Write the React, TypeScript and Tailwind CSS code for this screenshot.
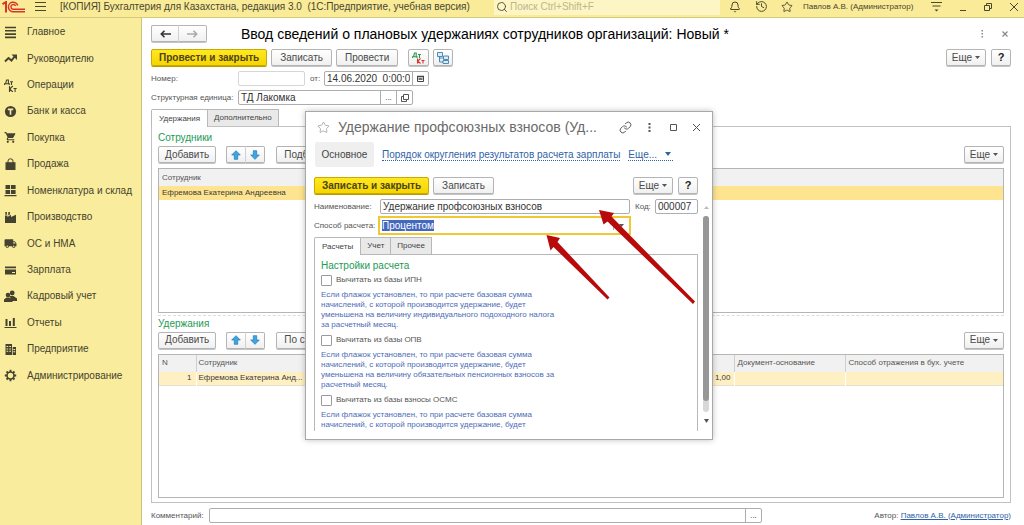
import { useEffect, useRef, type ReactNode } from "react";
import { Bell, History, Star, Search, Link as LinkIcon } from "lucide-react";
import { MdShoppingCart, MdLocalShipping } from "react-icons/md";

const menu: { label: string; icon: ReactNode }[] = [
  { label: "Главное", icon: <path d="M1 1.5h11M1 4.8h11M1 8.1h11M1 11.4h11" stroke="currentColor" strokeWidth="1.6" /> },
  {
    label: "Руководителю",
    icon: (
      <>
        <path d="M1 9.5 4.5 6l3 2.5L11 4" fill="none" stroke="currentColor" strokeWidth="2" />
        <path d="M7.5 2.5H13V8z" />
      </>
    ),
  },
  {
    label: "Операции",
    icon: (
      <g fill="none" stroke="currentColor" strokeWidth="1.1">
        <path d="M.5 6V4.8h4.8V6M1.5 4.8 2.6 1h1.8v3.800M6 2.800h3M7.500 2.800V6M5.500 7v6M8.800 7 5.700 10l3.100 3M9.500 9.500h3.200M11.100 9.500V13" />
      </g>
    ),
  },
  {
    label: "Банк и касса",
    icon: (
      <>
        <circle cx="6.5" cy="6.5" r="5.6" />
        <path d="M3.8 4.4h5.4M6.5 4.4v5.4" stroke="#faec9d" strokeWidth="1.6" />
      </>
    ),
  },
  { label: "Покупка", icon: <MdShoppingCart size={13} /> },
  {
    label: "Продажа",
    icon: (
      <>
        <path d="M1.5 4.2h10V12h-10z" />
        <path d="M4 6V3a2.5 2.2 0 0 1 5 0v3" fill="none" stroke="currentColor" strokeWidth="1" />
      </>
    ),
  },
  { label: "Номенклатура и склад", icon: <path d="M1.5 1h4.6v4H1.5zM7 1h4.600v4H7zM1.500 6h4.600v4H1.500zM7 6h4.600v4H7zM.5 11h12v1.200H.5z" /> },
  { label: "Производство", icon: <path d="M1 12V4.500h2.500V6L7 3.800V6l5-2.200V12zM1.300 1h1.600v2.800H1.300zM4.300 1h1.600v2.500l-1.600 1z" /> },
  { label: "ОС и НМА", icon: <MdLocalShipping size={13} /> },
  { label: "Зарплата", icon: <path d="M1 2.500h11v1.700H1zM1 5.500h11v5H1zM8 8v1h3V8z" fillRule="evenodd" /> },
  {
    label: "Кадровый учет",
    icon: (
      <>
        <circle cx="8.200" cy="3" r="2.400" />
        <path d="M5.500 6h4l3.500 2.500V11H8z" />
        <circle cx="4" cy="5" r="2.300" />
        <path d="M0 12V9.500l2.500-2h3L8.500 9.500V12z" />
      </>
    ),
  },
  { label: "Отчеты", icon: <path d="M1.500 3h2v7h-2zM5 5h2v5H5zM8.800 2h2v8h-2zM.5 11h12v1H.5z" /> },
  {
    label: "Предприятие",
    icon: (
      <path
        fillRule="evenodd"
        d="M1.500 1H8v11H1.500zM8.700 4H12v8H8.700zM2.500 3v1h1.700V3zM5.300 3v1H7V3zM2.500 5.400v1h1.700v-1zM5.300 5.400v1H7v-1zM2.500 7.800v1h1.700v-1zM5.300 7.800v1H7v-1zM9.400 6v1h1.800V6zM9.400 8.300v1h1.800v-1z"
      />
    ),
  },
  {
    label: "Администрирование",
    icon: (
      <g fill="none" stroke="currentColor">
        <circle cx="6.500" cy="6.500" r="3.500" strokeWidth="1.600" />
        <path d="M6.500 3V.8M6.500 10v2.200M3 6.500H.8M10 6.500h2.200M4 4 2.500 2.500M9 9l1.500 1.500M9 4l1.500-1.500M4 9l-1.500 1.500" strokeWidth="1.800" />
      </g>
    ),
  },
];

const btnBase =
  "flex h-[17px] items-center rounded-[2px] border border-[#b4b4b4] bg-gradient-to-b from-white to-[#f0f0f0] text-[10px] text-[#4a4a4a] shadow-[0_1px_0_#c4c4c4]";

function Btn({ children, className = "justify-center px-2", label }: { children: ReactNode; className?: string; label?: string }) {
  return (
    <button type="button" aria-label={label} className={`${btnBase} ${className}`}>
      {children}
    </button>
  );
}

function PrimaryBtn({ children }: { children: ReactNode }) {
  return (
    <button
      type="button"
      className="flex h-[17px] items-center rounded-[2px] border border-[#c9ab00] bg-gradient-to-b from-[#ffe81f] to-[#f6d500] px-[7px] text-[10px] font-bold text-[#4c4319] shadow-[0_1px_0_#b89c00]"
    >
      {children}
    </button>
  );
}

function MoreBtn() {
  return (
    <Btn className="w-10 justify-center gap-[3px]">
      Еще
      <svg width="5" height="3" viewBox="0 0 5 3" fill="#555">
        <path d="M0 0h5L2.500 3z" />
      </svg>
    </Btn>
  );
}

function HelpBtn() {
  return (
    <Btn className="w-5 justify-center font-bold">
      <span className="text-[11px] text-[#222]">?</span>
    </Btn>
  );
}

function UpDown() {
  return (
    <div className="ml-[10px] flex">
      <Btn label="Вверх" className="w-5 justify-center rounded-r-none border-r-[#d0d0d0]">
        <svg width="10" height="10" viewBox="0 0 10 10" fill="#3fa4e4" stroke="#2278b5" strokeWidth=".7">
          <path d="M5 .7 9.300 5H6.700v4.300H3.300V5H.7z" />
        </svg>
      </Btn>
      <Btn label="Вниз" className="w-[19px] justify-center rounded-l-none border-l-0">
        <svg width="10" height="10" viewBox="0 0 10 10" fill="#3fa4e4" stroke="#2278b5" strokeWidth=".7">
          <path d="M5 9.300 9.300 5H6.700V.7H3.300V5H.7z" />
        </svg>
      </Btn>
    </div>
  );
}

function Tab({ children, active }: { children: ReactNode; active?: boolean }) {
  return (
    <button
      type="button"
      role="tab"
      aria-selected={!!active}
      className={
        active
          ? "relative -mb-px h-[18px] rounded-tl-[2px] border border-b-0 border-[#b8b8b8] bg-white px-[7px] text-[#444]"
          : "h-[17px] border border-b-0 border-l-0 border-[#b8b8b8] bg-[#e9e9e9] px-[6px] text-[#444]"
      }
    >
      {children}
    </button>
  );
}

function Header() {
  return (
    <header className="flex h-[18px] shrink-0 items-start overflow-hidden border-b border-[#d6c97c] bg-[#f9eb98] pr-1 text-[#4a4630]">
      <div className="flex h-[13px] min-w-0 flex-1 items-center">
        <svg width="24" height="12" viewBox="0 0 24 12" className="ml-[2px] shrink-0" fill="none" stroke="#d8352c" aria-label="1С">
          <path d="M.5 3.200 4 1v10.500" strokeWidth="2" />
          <path d="M15.800 4.500A4.800 4.800 0 1 0 11.500 10.800H23" strokeWidth="1.500" />
          <path d="M13.600 5A2.400 2.400 0 1 0 11.500 8.300H23" strokeWidth="1.400" />
        </svg>
        <svg width="11" height="9" viewBox="0 0 11 9" className="ml-[9px] shrink-0" stroke="#4a4630" aria-hidden="true">
          <path d="M0 .5h11M0 4.500h11M0 8.500h11" />
        </svg>
        <div className="ml-[14px] truncate whitespace-pre text-[10px] leading-[13px]">
          {"[КОПИЯ] Бухгалтерия для Казахстана, редакция 3.0  (1С:Предприятие, учебная версия)"}
        </div>
      </div>
      <label className="flex h-[15px] w-[226px] shrink-0 items-center bg-[#fdf5c4] pb-[2px]">
        <Search size={12} strokeWidth={1.8} className="ml-[2px] shrink-0" />
        <input aria-label="Поиск" placeholder="Поиск Ctrl+Shift+F" className="ml-[2px] w-full bg-transparent text-[10px] leading-[13px] outline-none placeholder:text-[#bdb68c]" />
      </label>
      <div className="flex h-[13px] w-[300px] shrink-0 items-center">
        <button type="button" aria-label="Уведомления" className="ml-[9px]">
          <Bell size={12} strokeWidth={2} />
        </button>
        <button type="button" aria-label="История" className="ml-[14px]">
          <History size={13} strokeWidth={1.8} />
        </button>
        <button type="button" aria-label="Избранное" className="ml-[13px]">
          <Star size={12} strokeWidth={1.8} />
        </button>
        <span className="ml-[10px] w-[128px] whitespace-nowrap text-[8px]">Павлов А.В. (Администратор)</span>
        <svg width="11" height="11" viewBox="0 0 11 11" stroke="currentColor" aria-hidden="true">
          <path d="M0 1.500h11M1.500 5h8" />
          <path d="M3.500 8.500h4l-2 2z" fill="currentColor" stroke="none" />
        </svg>
        <svg width="8" height="9" viewBox="0 0 8 9" className="ml-[17px]" stroke="currentColor" aria-hidden="true">
          <path d="M1 8.500h6" />
        </svg>
        <svg width="8" height="8" viewBox="0 0 8 8" className="ml-[17px]" fill="none" stroke="currentColor" aria-hidden="true">
          <path d="M.5 2.500h5v5h-5zM2.500 2.500v-2h5v5h-2" />
        </svg>
        <svg width="8" height="8" viewBox="0 0 8 8" className="ml-[18px]" stroke="currentColor" aria-hidden="true">
          <path d="m0 0 8 8M8 0 0 8" />
        </svg>
      </div>
    </header>
  );
}

function Sidebar() {
  return (
    <nav className="w-[142px] shrink-0 border-r border-[#cfc37c] bg-[#faec9d] pt-px">
      <ul className="flex h-[370px] flex-col">
        {menu.map((m) => (
          <li key={m.label} className="flex flex-1">
            <a href="#" className="flex flex-1 items-center gap-[10px] pl-1 text-[10px] text-[#45432f]">
              <svg width="13" height="13" viewBox="0 0 13 13" fill="currentColor" aria-hidden="true">
                {m.icon}
              </svg>
              {m.label}
            </a>
          </li>
        ))}
      </ul>
    </nav>
  );
}

const field = "flex h-[15px] items-stretch rounded-[2px] border border-[#adadad] bg-white text-[10px] text-[#333]";
const fieldInput = "min-w-0 flex-1 bg-transparent px-[2px] outline-none";
const fieldBtn = "flex w-4 shrink-0 items-center justify-center border-l border-[#adadad]";

function Dialog() {
  const method = useRef<HTMLInputElement>(null);
  useEffect(() => {
    method.current?.focus();
    method.current?.select();
  }, []);
  const options = [
    {
      label: "Вычитать из базы ИПН",
      lines: ["Если флажок установлен, то при расчете базовая сумма", "начислений, с которой производится удержание, будет", "уменьшена на величину индивидуального подоходного налога", "за расчетный месяц."],
    },
    {
      label: "Вычитать из базы ОПВ",
      lines: ["Если флажок установлен, то при расчете базовая сумма", "начислений, с которой производится удержание, будет", "уменьшена на величину обязательных пенсионных взносов за", "расчетный месяц."],
    },
    {
      label: "Вычитать из базы взносы ОСМС",
      lines: ["Если флажок установлен, то при расчете базовая сумма", "начислений, с которой производится удержание, будет"],
    },
  ];
  return (
    <section
      role="dialog"
      aria-label="Удержание профсоюзных взносов"
      className="absolute left-[305px] top-[111px] flex h-[329px] w-[408px] flex-col border border-[#a8a8a8] bg-white shadow-[0_0_6px_rgba(0,0,0,0.25)]"
    >
      <div className="flex h-[30px] shrink-0 items-center pl-[11px] pr-3 text-[#555]">
        <Star size={13} strokeWidth={1.4} className="shrink-0 text-[#999]" />
        <h2 className="ml-2 flex-1 whitespace-nowrap text-[14px] text-[#6a6a6a]">Удержание профсоюзных взносов (Уд...</h2>
        <LinkIcon size={13} strokeWidth={1.8} />
        <svg width="3" height="9" viewBox="0 0 3 9" className="ml-4" fill="currentColor" aria-hidden="true">
          <path d="M.5 0h2v2h-2zM.5 3.500h2v2h-2zM.5 7h2v2h-2z" />
        </svg>
        <svg width="7" height="7" viewBox="0 0 7 7" className="ml-[19px]" fill="none" stroke="currentColor" aria-hidden="true">
          <path d="M.5.5h6v6h-6z" />
        </svg>
        <svg width="7" height="7" viewBox="0 0 7 7" className="ml-4" stroke="currentColor" aria-hidden="true">
          <path d="m0 0 7 7M7 0 0 7" />
        </svg>
      </div>
      <div className="flex h-[25px] shrink-0 items-center pl-[9px] text-[10px] text-[#2f62a8]">
        <span className="flex h-full w-[59px] items-center justify-center rounded-[2px] bg-[#efefef] text-[#444]">Основное</span>
        <a href="#" className="ml-2 border-b border-dotted border-[#2f62a8] leading-[11px]">
          Порядок округления результатов расчета зарплаты
        </a>
        <a href="#" className="ml-2 flex items-center gap-2 border-b border-dotted border-[#2f62a8] pr-[2px] leading-[11px]">
          Еще...
          <svg width="6" height="4" viewBox="0 0 6 4" fill="#2f62a8">
            <path d="M0 0h6L3 4z" />
          </svg>
        </a>
      </div>
      <div className="mt-[10px] flex shrink-0 gap-1 pl-2 pr-[14px]">
        <PrimaryBtn>Записать и закрыть</PrimaryBtn>
        <Btn>Записать</Btn>
        <div className="ml-auto flex gap-[5px]">
          <MoreBtn />
          <HelpBtn />
        </div>
      </div>
      <div className="flex min-h-0 flex-1">
        <div className="flex min-w-0 flex-1 flex-col pb-2 pl-2">
          <div className="mt-[5px] flex items-center text-[8px] text-[#555]">
            <label htmlFor="name" className="w-[66px]">
              Наименование:
            </label>
            <div className={`${field} w-[250px]`}>
              <input id="name" defaultValue="Удержание профсоюзных взносов" className={fieldInput} />
            </div>
            <label htmlFor="code" className="ml-[5px] w-5">
              Код:
            </label>
            <div className={`${field} min-w-0 flex-1`}>
              <input id="code" defaultValue="000007" className={fieldInput} />
            </div>
          </div>
          <div className="mt-[2px] flex items-center text-[8px] text-[#555]">
            <label htmlFor="method" className="w-16 whitespace-nowrap">
              Способ расчета:
            </label>
            <div className="flex h-[19px] w-[253px] items-center border-2 border-[#f0c832] bg-white text-[10px] text-[#333]">
              <input id="method" ref={method} defaultValue="Процентом" className={`${fieldInput} selection:bg-[#4468bd] selection:text-white`} />
              <button type="button" aria-label="Выбрать" className="flex h-2 w-4 items-center justify-center border-l border-[#aaa]">
                <svg width="5" height="3" viewBox="0 0 5 3" fill="#555">
                  <path d="M0 0h5L2.500 3z" />
                </svg>
              </button>
            </div>
          </div>
          <div role="tablist" className="mt-[2px] flex items-end text-[8px]">
            <Tab active>Расчеты</Tab>
            <Tab>Учет</Tab>
            <Tab>Прочее</Tab>
          </div>
          <div className="min-h-0 flex-1 overflow-hidden border border-b-0 border-[#b8b8b8] pl-[6px] pt-1">
            <h3 className="h-[15px] text-[10px] leading-[14px] text-[#1c9a55]">Настройки расчета</h3>
            {options.map((o) => (
              <div key={o.label} className="mb-1">
                <label className="flex h-3 items-center gap-1 text-[8px] text-[#555]">
                  <input type="checkbox" className="h-[11px] w-[11px] appearance-none rounded-[1px] border border-[#9a9a9a] bg-white" />
                  {o.label}
                </label>
                <p className="mt-1 text-[8px] leading-[10px] text-[#4d6cb5]">
                  {o.lines.map((l) => (
                    <span key={l} className="block whitespace-nowrap">
                      {l}
                    </span>
                  ))}
                </p>
              </div>
            ))}
          </div>
        </div>
        <div className="flex w-[14px] shrink-0 flex-col items-center pb-4 pl-[2px] pt-3">
          <svg width="5" height="3" viewBox="0 0 5 3" fill="#bbb" aria-hidden="true">
            <path d="M0 3h5L2.500 0z" />
          </svg>
          <div className="my-[7px] w-[6px] flex-1 rounded-full bg-[#d8d8d8] pb-[11px]">
            <div className="h-full rounded-full bg-[#979797]" />
          </div>
          <svg width="5" height="4" viewBox="0 0 5 4" fill="#555" aria-hidden="true">
            <path d="M0 0h5L2.500 4z" />
          </svg>
        </div>
      </div>
    </section>
  );
}

export default function App() {
  return (
    <div className="relative flex min-h-screen flex-col overflow-hidden bg-white font-['Liberation_Sans',Arial,sans-serif] leading-none">
      <Header />
      <div className="flex flex-1">
        <Sidebar />
        <main className="flex min-w-0 flex-1 flex-col pb-[2px] pl-[9px] pr-[13px] pt-[6px]">
          <div className="flex h-[19px] items-center">
            <div className="flex">
              <Btn label="Назад" className="w-7 justify-center rounded-r-none border-r-[#d0d0d0]">
                <svg width="11" height="8" viewBox="0 0 11 8" fill="none" stroke="#333" strokeWidth="1.600">
                  <path d="M11 4H1.500M4.500.8 1.300 4l3.200 3.200" />
                </svg>
              </Btn>
              <Btn label="Вперед" className="w-7 justify-center rounded-l-none border-l-0">
                <svg width="11" height="8" viewBox="0 0 11 8" fill="none" stroke="#aaa" strokeWidth="1.600">
                  <path d="M0 4h9.500M6.500.8 9.700 4 6.500 7.200" />
                </svg>
              </Btn>
            </div>
            <h1 className="ml-[34px] flex-1 whitespace-nowrap text-[14px] text-black">Ввод сведений о плановых удержаниях сотрудников организаций: Новый *</h1>
            <svg width="3" height="8" viewBox="0 0 3 8" fill="#888" aria-hidden="true">
              <path d="M.5 0h1.500v1.500H.5zM.5 3h1.500v1.500H.5zM.5 6h1.500v1.500H.5z" />
            </svg>
            <svg width="6" height="6" viewBox="0 0 6 6" className="ml-[18px] mr-[3px]" stroke="#888" strokeWidth="1.200" aria-hidden="true">
              <path d="m.5.5 5 5M5.500.5l-5 5" />
            </svg>
          </div>

          <div className="mt-[6px] flex gap-1">
            <PrimaryBtn>Провести и закрыть</PrimaryBtn>
            <Btn>Записать</Btn>
            <Btn>Провести</Btn>
            <Btn label="Дт/Кт" className="ml-[6px] w-[21px] justify-center">
              <svg width="13" height="12" viewBox="0 0 13 12" fill="none">
                <path d="M.5 6V4.800h4.500V6M1.500 4.800 2.500 1h1.700v3.800M6 2.500h3M7.500 2.500V6" stroke="#2c9a4a" strokeWidth="1.100" />
                <path d="M5.500 6.500v5M8.500 6.500l-2.800 2.500 2.800 2.500M9.500 8.500h3M11 8.500v3" stroke="#d33" strokeWidth="1.100" />
              </svg>
            </Btn>
            <Btn label="Структура" className="w-5 justify-center">
              <svg width="12" height="12" viewBox="0 0 12 12" fill="#d9ecf8" stroke="#3c7fae" strokeWidth=".9">
                <path d="M.5.5h5v4h-5zM6.500 4h5v3.500h-5zM6 8.500h5.500v3H6zM2.500 4.500V10H6M2.500 6h4" />
              </svg>
            </Btn>
            <div className="ml-auto flex gap-[5px]">
              <MoreBtn />
              <HelpBtn />
            </div>
          </div>

          <div className="mt-[5px] flex h-[15px] items-center text-[8px] text-[#555]">
            <label htmlFor="number" className="w-[87px]">
              Номер:
            </label>
            <div className={`${field} w-[67px] border-[#d6d6d6]`}>
              <input id="number" className={fieldInput} />
            </div>
            <label htmlFor="date" className="ml-[5px] w-[14px]">
              от:
            </label>
            <div className={`${field} w-[105px]`}>
              <input id="date" defaultValue="14.06.2020  0:00:0" className={fieldInput} />
              <button type="button" aria-label="Календарь" className={fieldBtn}>
                <svg width="7" height="7" viewBox="0 0 7 7" fill="none" stroke="#444">
                  <path d="M.5 1.500h6v5h-6z" />
                  <path d="M0 1.500h7M1.500 4h4" strokeWidth="1.600" />
                </svg>
              </button>
            </div>
          </div>

          <div className="mt-1 flex h-[15px] items-center text-[8px] text-[#555]">
            <label htmlFor="unit" className="w-[87px] whitespace-nowrap">
              Структурная единица:
            </label>
            <div className={`${field} w-[175px]`}>
              <input id="unit" defaultValue="ТД Лакомка" className={fieldInput} />
              <button type="button" className={`${fieldBtn} text-[8px]`}>
                ...
              </button>
              <button type="button" aria-label="Открыть" className={fieldBtn}>
                <svg width="8" height="8" viewBox="0 0 8 8" fill="none" stroke="#555">
                  <path d="M2.500.5h5v5h-5zM2.500 2.500h-2v5h5v-2" />
                </svg>
              </button>
            </div>
          </div>

          <div role="tablist" className="mt-[4px] flex items-end text-[8px]">
            <Tab active>Удержания</Tab>
            <Tab>Дополнительно</Tab>
          </div>

          <div className="flex flex-1 flex-col border border-[#c2c2c2] px-[6px] pb-1 pt-1">
            <h2 className="h-[15px] text-[10px] leading-[14px] text-[#1c9a55]">Сотрудники</h2>
            <div className="flex">
              <Btn className="px-[6px]">Добавить</Btn>
              <UpDown />
              <Btn className="ml-[11px] w-16 px-[7px]">Подб</Btn>
              <div className="ml-auto">
                <MoreBtn />
              </div>
            </div>
            <div className="mt-[5px] flex-1 border border-[#b5b5b5]">
              <table className="w-full table-fixed border-collapse text-left text-[8px]">
                <thead>
                  <tr className="h-[17px] bg-[#f1f1f1] text-[#555]">
                    <th className="pl-[3px] font-normal">Сотрудник</th>
                  </tr>
                </thead>
                <tbody>
                  <tr className="h-[14px] bg-[#ffe48f] text-[#3a3a3a]">
                    <td className="pl-[3px]">Ефремова Екатерина Андреевна</td>
                  </tr>
                </tbody>
              </table>
            </div>
            <div className="mt-[2px] border-t border-dashed border-[#dcdcdc]" />
            <h2 className="mt-px h-[15px] text-[10px] leading-[14px] text-[#1c9a55]">Удержания</h2>
            <div className="flex">
              <Btn className="px-[6px]">Добавить</Btn>
              <UpDown />
              <Btn className="ml-[11px] w-20 px-[7px]">По с</Btn>
              <div className="ml-auto">
                <MoreBtn />
              </div>
            </div>
            <div className="mt-[5px] flex-1 border border-[#b5b5b5]">
              <table className="w-full table-fixed border-collapse text-left text-[8px]">
                <colgroup>
                  <col className="w-[37px]" />
                  <col />
                  <col className="w-[111px]" />
                  <col className="w-[111px]" />
                  <col className="w-[158px]" />
                </colgroup>
                <thead>
                  <tr className="h-[17px] bg-[#f1f1f1] text-[#555]">
                    <th className="border-r border-[#cfcfcf] pl-[3px] font-normal">N</th>
                    <th className="border-r border-[#cfcfcf] pl-[2px] font-normal">Сотрудник</th>
                    <th className="border-r border-[#cfcfcf]" />
                    <th className="border-r border-[#cfcfcf] pl-[3px] font-normal">Документ-основание</th>
                    <th className="pl-[3px] font-normal">Способ отражения в бух. учете</th>
                  </tr>
                </thead>
                <tbody>
                  <tr className="h-[14px] border-b border-[#e6e0cc] bg-[#fff0c4] text-[#3a3a3a]">
                    <td className="border-r border-white pr-1 text-right">1</td>
                    <td className="border-r border-white pl-[2px]">Ефремова Екатерина Анд...</td>
                    <td className="border-r border-white pr-[3px] text-right">1,00</td>
                    <td className="border-r border-white" />
                    <td />
                  </tr>
                </tbody>
              </table>
            </div>
          </div>

          <div className="mt-[5px] flex h-[15px] items-center text-[8px] text-[#555]">
            <label htmlFor="comment" className="w-[58px]">
              Комментарий:
            </label>
            <div className={`${field} w-[553px]`}>
              <input id="comment" className={fieldInput} />
              <button type="button" className={`${fieldBtn} text-[8px]`}>
                ...
              </button>
            </div>
            <span className="ml-auto">
              Автор:{" "}
              <a href="#" className="text-[#2f62a8] underline">
                Павлов А.В. (Администратор)
              </a>
            </span>
          </div>
        </main>
      </div>

      <Dialog />

      <svg width="170" height="110" viewBox="540 200 170 110" className="pointer-events-none absolute left-[540px] top-[200px]" fill="#b80a0a" aria-hidden="true">
        <path d="M599 210 614 213 611.500 216.500 695 301.500 693 304 607.500 221.500 603.500 224.500z" />
        <path d="M546.500 235 560 238 557.500 242 609.500 297.500 607.500 299.500 553.500 247 550.500 250.500z" />
      </svg>
    </div>
  );
}
